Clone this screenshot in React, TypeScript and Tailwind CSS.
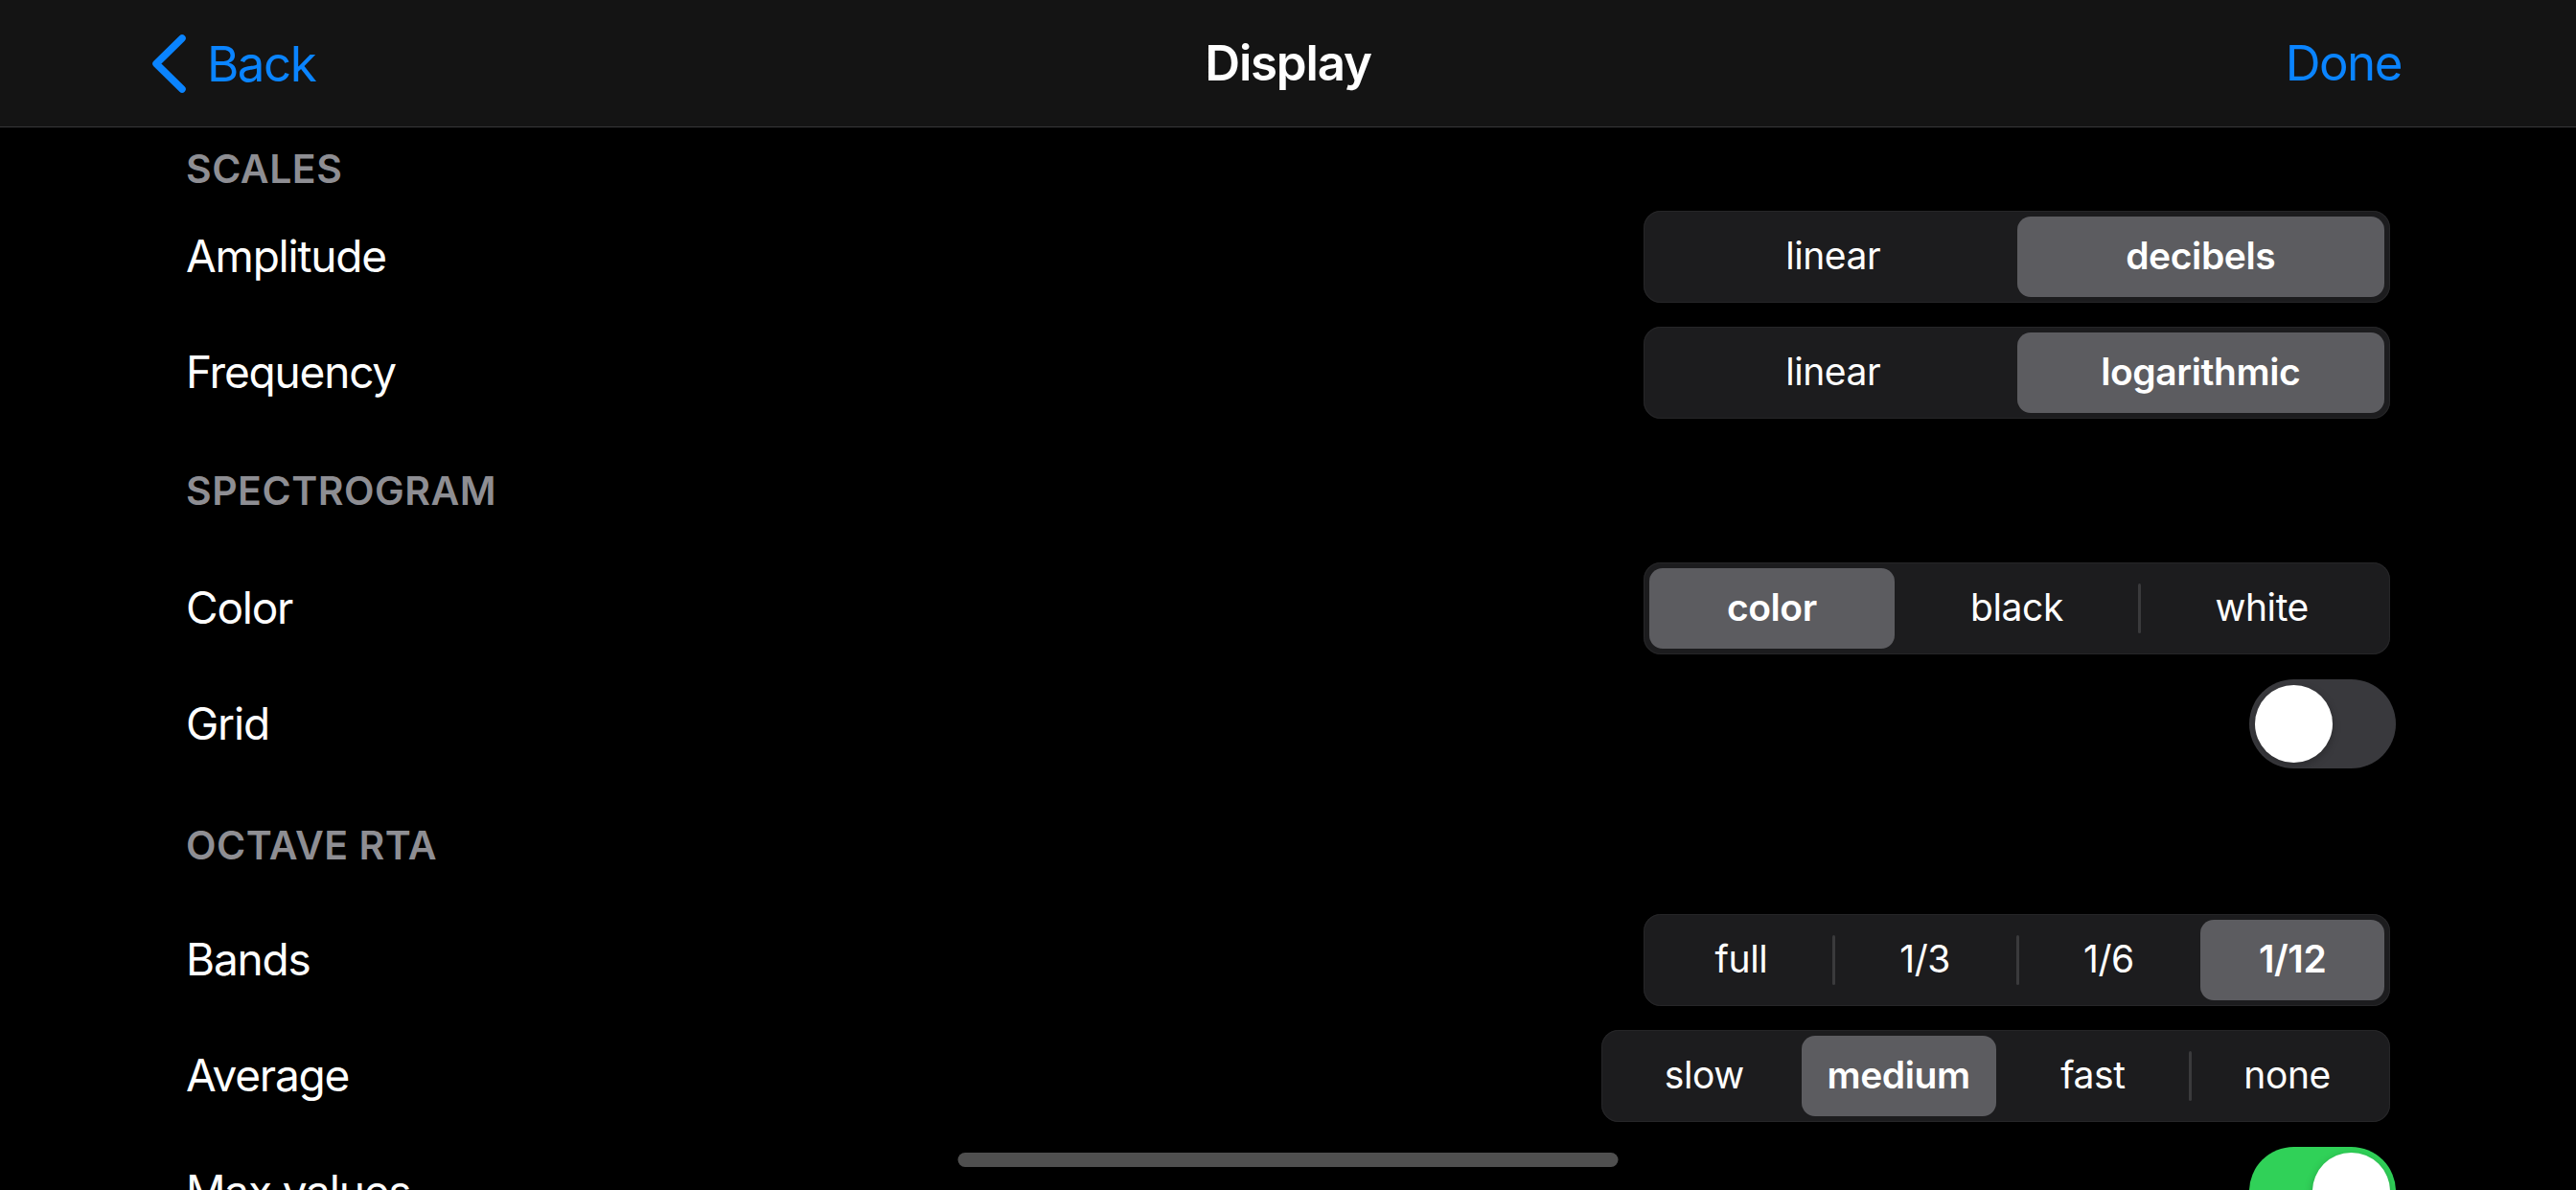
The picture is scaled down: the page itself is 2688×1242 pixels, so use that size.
import React from "react";

type SegProps = {
  options: string[];
  selected: number;
  width: string;
};

function Segmented({ options, selected, width }: SegProps) {
  return (
    <div
      className={`flex h-[96px] items-stretch rounded-[18px] bg-[#1c1c1e] p-[6px] shadow-[inset_0_0_0_1px_#262628] ${width}`}
    >
      {options.map((opt, i) => {
        // iOS hides the hairline next to the selected segment
        const divider = i > 0 && i !== selected && i - 1 !== selected;
        const active = i === selected;
        return (
          <div key={opt} className="relative flex flex-1 items-center justify-center">
            {i > 0 && (
              <span
                className={`absolute left-[-1px] top-[16px] h-[52px] w-[3px] rounded-full ${
                  divider ? "bg-[#3a3a3c]" : "bg-transparent"
                }`}
              />
            )}
            <div
              className={`flex h-full w-full items-center justify-center rounded-[14px] text-[39px] tracking-[-0.4px] text-white ${
                active ? "bg-[#5c5c60] font-semibold" : "font-normal"
              }`}
            >
              {opt}
            </div>
          </div>
        );
      })}
    </div>
  );
}

function Toggle({ on }: { on: boolean }) {
  return (
    <div
      className={`mr-[-6px] flex h-[93px] w-[153px] items-center rounded-full p-[6px] ${
        on ? "justify-end bg-[#30d158]" : "justify-start bg-[#39393d]"
      }`}
    >
      <div className="h-[81px] w-[81px] rounded-full bg-white shadow-[0_3px_8px_rgba(0,0,0,0.25)]" />
    </div>
  );
}

function Row({ label, children }: { label: string; children: React.ReactNode }) {
  return (
    <div className="flex h-[121px] shrink-0 items-center justify-between">
      <span className="text-[46px] tracking-[-1.2px] text-white">{label}</span>
      {children}
    </div>
  );
}

function SectionHeader({ title, className }: { title: string; className: string }) {
  return (
    <div className={`flex shrink-0 ${className}`}>
      <span className="text-[41px] font-semibold uppercase tracking-[0.5px] text-[#8e8e93]">
        {title}
      </span>
    </div>
  );
}

export default function App() {
  return (
    <div className="relative flex h-[1242px] w-[2688px] flex-col overflow-hidden bg-black font-[family-name:Inter,sans-serif] antialiased">
      {/* nav bar */}
      <div className="grid h-[133px] shrink-0 grid-cols-[1fr_auto_1fr] items-center border-b border-[#38383a] bg-[#141414] px-[158px]">
        <div className="flex items-center gap-[21px] text-[#0a84ff]">
          <svg width="37" height="63" viewBox="0 0 37 63" fill="none">
            <path
              d="M32 5 L5 31.5 L32 58"
              stroke="#0a84ff"
              strokeWidth="7.5"
              strokeLinecap="round"
              strokeLinejoin="round"
            />
          </svg>
          <span className="text-[51px] leading-none tracking-[-1.5px]">Back</span>
        </div>
        <div className="text-center text-[51px] font-semibold tracking-[-1.2px] text-white">
          Display
        </div>
        <span className="mr-[24px] justify-self-end text-[51px] tracking-[-1.5px] text-[#0a84ff]">
          Done
        </span>
      </div>

      {/* settings list */}
      <div className="flex flex-col px-[194px]">
        <SectionHeader title="Scales" className="h-[74px] items-end" />
        <Row label="Amplitude">
          <Segmented options={["linear", "decibels"]} selected={1} width="w-[779px]" />
        </Row>
        <Row label="Frequency">
          <Segmented options={["linear", "logarithmic"]} selected={1} width="w-[779px]" />
        </Row>

        <SectionHeader title="Spectrogram" className="h-[125px] items-center pt-[3px]" />
        <Row label="Color">
          <Segmented options={["color", "black", "white"]} selected={0} width="w-[779px]" />
        </Row>
        <Row label="Grid">
          <Toggle on={false} />
        </Row>

        <SectionHeader title="Octave RTA" className="h-[125px] items-center pt-[9px]" />
        <Row label="Bands">
          <Segmented options={["full", "1/3", "1/6", "1/12"]} selected={3} width="w-[779px]" />
        </Row>
        <Row label="Average">
          <Segmented options={["slow", "medium", "fast", "none"]} selected={1} width="w-[823px]" />
        </Row>
        <Row label="Max values">
          <Toggle on={true} />
        </Row>
      </div>

      {/* home indicator */}
      <div className="absolute left-1/2 top-[1203px] h-[15px] w-[689px] -translate-x-1/2 rounded-full bg-[#4f4f4f]" />
    </div>
  );
}
